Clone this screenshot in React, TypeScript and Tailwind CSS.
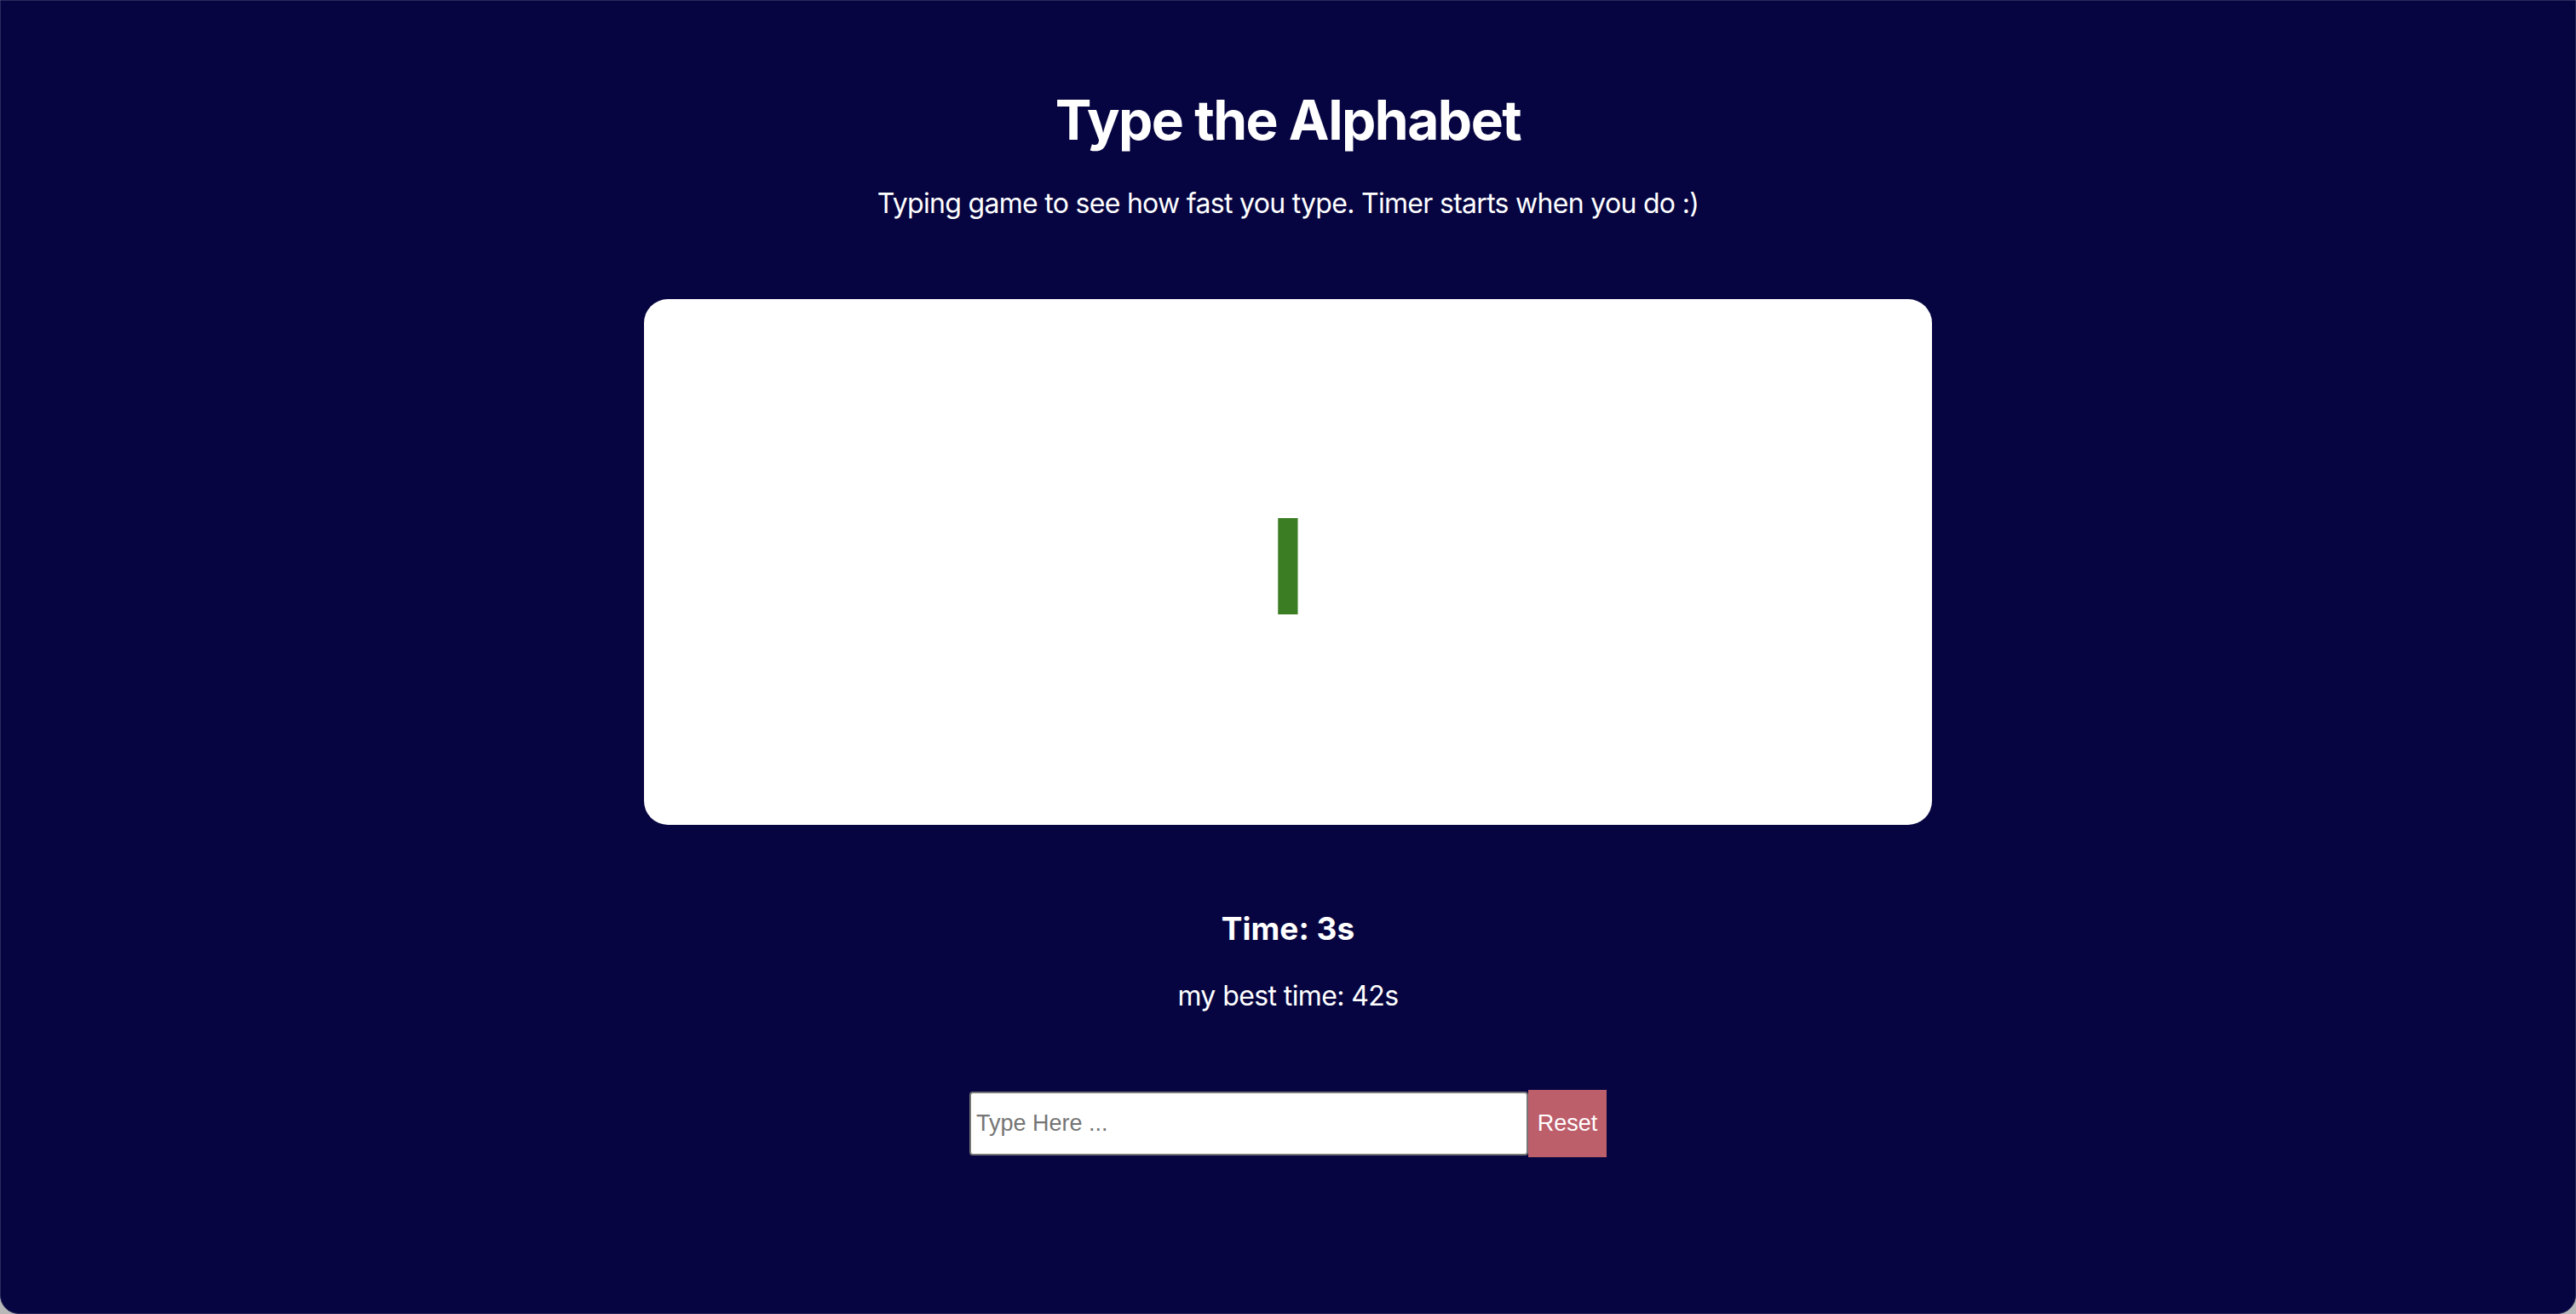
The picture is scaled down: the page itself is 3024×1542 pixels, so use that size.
import { useState } from "react";

export default function App() {
  const [value, setValue] = useState("");

  return (
    <div className="w-[3024px] h-[1542px] bg-[#b8b8b8]">
      <div
        className="h-full flex flex-col items-center bg-[#060541] border border-[#2a2a5c] rounded-b-[22px] text-white"
        style={{ fontFamily: "Inter, 'Noto Sans', sans-serif" }}
      >
        {/* Header */}
        <h1 className="pt-[101px] text-[64px] leading-[78px] font-bold tracking-[-1.5px]">Type the Alphabet</h1>
        <p className="mt-[39px] text-[32px] leading-[40px] tracking-[-0.7px]">
          Typing game to see how fast you type. Timer starts when you do :)
        </p>

        {/* Letter card */}
        <div className="mt-[92px] w-[1512px] h-[617px] bg-white rounded-[28px] flex items-center justify-center">
          <span className="text-[156px] leading-none font-bold text-[#3b7d23] translate-y-[5px]">I</span>
        </div>

        {/* Stats */}
        <h3 className="mt-[99px] text-[37px] leading-[45px] font-bold">Time: 3s</h3>
        <p className="mt-[37px] text-[32px] leading-[40px] tracking-[-0.6px]">my best time: 42s</p>

        {/* Controls */}
        <div className="mt-[90px] flex items-center" style={{ fontFamily: "'Liberation Sans', Arial, sans-serif" }}>
          <input
            value={value}
            onChange={(e) => setValue(e.target.value)}
            placeholder="Type Here ..."
            className="w-[656px] h-[75px] px-[6px] bg-white text-black text-[27px] border-2 border-[#767676] rounded-[4px] placeholder:text-[#757575] outline-none"
          />
          <button className="w-[92px] h-[79px] bg-[#bd5e6b] text-white text-[27px]" onClick={() => setValue("")}>
            Reset
          </button>
        </div>
      </div>
    </div>
  );
}
